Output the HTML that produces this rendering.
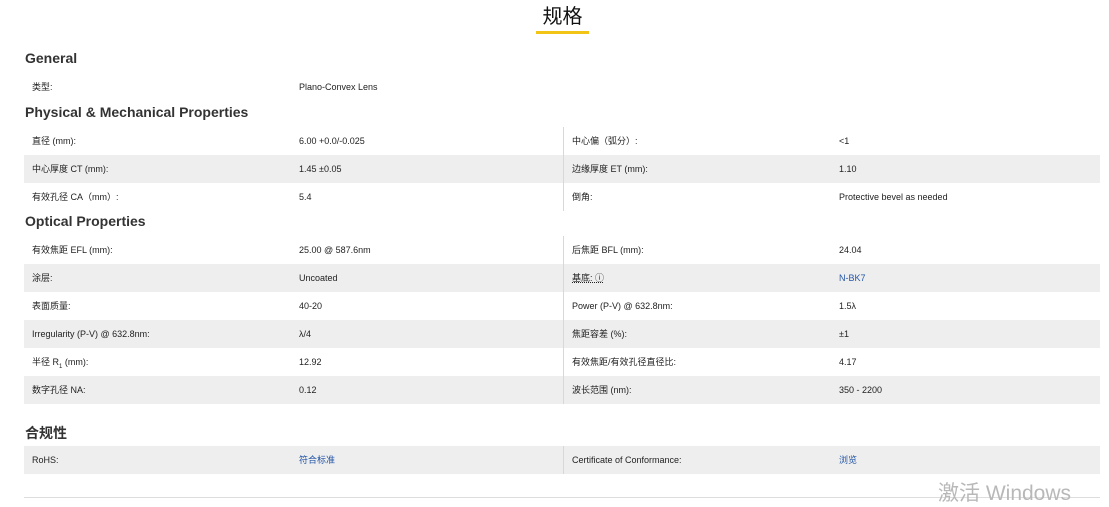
<!DOCTYPE html>
<html><head><meta charset="utf-8"><style>
body{margin:0;background:#fff;width:1109px;height:502px;overflow:hidden;position:relative;font-family:"Liberation Sans","Noto Sans CJK SC",sans-serif;color:#222}
.t{position:absolute;left:0;width:1125px;text-align:center;top:3px;font-size:20px;color:#111;line-height:28px}
.ul{position:absolute;left:536px;top:31px;width:53px;height:3px;background:#f2c415}
h3{position:absolute;left:25px;margin:0;font-size:14px;font-weight:bold;color:#333;line-height:18px}
.r{position:absolute;left:24px;width:1076px;height:28px;font-size:9px;line-height:28px}
.g{background:#eeeeee}
.r span{position:absolute}
.a{left:8px}.b{left:275px}.c{left:548px}.d{left:815px}
.r .v{left:539px;top:0;height:28px;width:1px;background:#d8d8d8}
.l{color:#2456a6}
.w{position:absolute;left:938px;top:477px;font-size:21px;color:#b8b8b8}
.line{position:absolute;left:24px;top:497px;width:1076px;height:1px;background:#ddd}
</style></head><body>
<div class="t">规格</div><div class="ul"></div>
<h3 style="top:49px">General</h3>
<div class="r" style="top:73px"><span class="a">类型:</span><span class="b">Plano-Convex Lens</span></div>
<h3 style="top:103px">Physical &amp; Mechanical Properties</h3>
<div class="r" style="top:127px"><span class="a">直径 (mm):</span><span class="b">6.00 +0.0/-0.025</span><i class="v" style="position:absolute"></i><span class="c">中心偏（弧分）:</span><span class="d">&lt;1</span></div>
<div class="r g" style="top:155px"><span class="a">中心厚度 CT (mm):</span><span class="b">1.45 ±0.05</span><i class="v" style="position:absolute"></i><span class="c">边缘厚度 ET (mm):</span><span class="d">1.10</span></div>
<div class="r" style="top:183px"><span class="a">有效孔径 CA（mm）:</span><span class="b">5.4</span><i class="v" style="position:absolute"></i><span class="c">倒角:</span><span class="d">Protective bevel as needed</span></div>
<h3 style="top:212px">Optical Properties</h3>
<div class="r" style="top:236px"><span class="a">有效焦距 EFL (mm):</span><span class="b">25.00 @ 587.6nm</span><i class="v" style="position:absolute"></i><span class="c">后焦距 BFL (mm):</span><span class="d">24.04</span></div>
<div class="r g" style="top:264px"><span class="a">涂层:</span><span class="b">Uncoated</span><i class="v" style="position:absolute"></i><span class="c" style="text-decoration:underline dotted">基底: ⓘ</span><span class="d l">N-BK7</span></div>
<div class="r" style="top:292px"><span class="a">表面质量:</span><span class="b">40-20</span><i class="v" style="position:absolute"></i><span class="c">Power (P-V) @ 632.8nm:</span><span class="d">1.5λ</span></div>
<div class="r g" style="top:320px"><span class="a">Irregularity (P-V) @ 632.8nm:</span><span class="b">λ/4</span><i class="v" style="position:absolute"></i><span class="c">焦距容差 (%):</span><span class="d">±1</span></div>
<div class="r" style="top:348px"><span class="a">半径 R<sub style="font-size:6px">1</sub> (mm):</span><span class="b">12.92</span><i class="v" style="position:absolute"></i><span class="c">有效焦距/有效孔径直径比:</span><span class="d">4.17</span></div>
<div class="r g" style="top:376px"><span class="a">数字孔径 NA:</span><span class="b">0.12</span><i class="v" style="position:absolute"></i><span class="c">波长范围 (nm):</span><span class="d">350 - 2200</span></div>
<h3 style="top:424px">合规性</h3>
<div class="r g" style="top:446px"><span class="a">RoHS:</span><span class="b l">符合标准</span><i class="v" style="position:absolute"></i><span class="c">Certificate of Conformance:</span><span class="d l">浏览</span></div>
<div class="line"></div>
<div class="w">激活 Windows</div>
</body></html>
